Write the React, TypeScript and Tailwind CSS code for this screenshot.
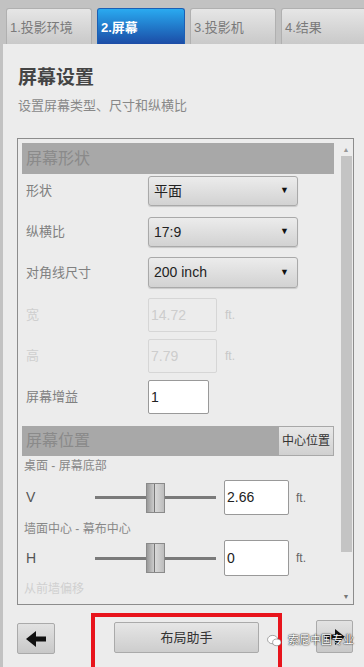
import { ReactNode } from 'react';

const font = { fontFamily: '"Liberation Sans", "Noto Sans CJK SC", sans-serif' };

const tabs = [
  { name: '1.投影环境', w: 'w-[86px]', active: false },
  { name: '2.屏幕', w: 'w-[88px]', active: true },
  { name: '3.投影机', w: 'w-[86px]', active: false },
  { name: '4.结果', w: 'w-[86px]', active: false },
];

function Select({ value }: { value: string }) {
  return (
    <div className="flex h-full w-[150px] items-center justify-between rounded-[3px] border border-[#a9a9a9] bg-gradient-to-b from-[#ececec] to-[#d2d2d2] pl-[5px] pr-[8px] text-[14px] text-[#222] shadow-[0_1px_1px_rgba(0,0,0,0.15)]">
      <span>{value}</span>
      <span className="text-[9px] text-[#111]">▼</span>
    </div>
  );
}

function Row({ label, dim, className, children }: { label: string; dim?: boolean; className: string; children: ReactNode }) {
  return (
    <div className={`flex items-center ${className}`}>
      <span className={`w-[126px] pl-[4px] text-[13px] ${dim ? 'text-[#cfcfcf]' : 'text-[#808080]'}`}>{label}</span>
      {children}
    </div>
  );
}

function Slider() {
  return (
    <div className="relative flex h-[30px] w-[121px] items-center">
      <div className="h-[3px] w-full bg-[#7a7a7a]" />
      <div className="absolute left-[51px] top-0 flex h-[30px] w-[19px] border border-[#8a8a8a] bg-gradient-to-r from-[#9a9a9a] via-[#d8d8d8] to-[#bdbdbd]">
        <div className="w-[8px] border-r border-[#777]" />
      </div>
    </div>
  );
}

function Arrow({ dir }: { dir: 'left' | 'right' }) {
  return (
    <svg width="22" height="16" viewBox="0 0 22 16" className={dir === 'right' ? '' : 'rotate-180'}>
      <path d="M1 5.5h10V0l10 8-10 8v-5.5H1z" fill="#111" />
    </svg>
  );
}

export default function App() {
  return (
    <div className="relative flex h-[667px] w-[364px] flex-col overflow-hidden bg-[#c2c2c2]" style={font}>
      <div className="h-[4px] bg-[#444]" />

      {/* tab strip */}
      <div className="flex h-[44px] items-end gap-[5px] pl-[6px] pt-[8px]">
        {tabs.map((t) => (
          <div
            key={t.name}
            className={`${t.w} flex h-[36px] shrink-0 items-center rounded-t-[3px] border-x border-t pl-[3px] pt-[3px] text-[13px] ${
              t.active
                ? 'border-[#1b5fb4] bg-gradient-to-b from-[#2aaaf0] to-[#1c4ca6] font-bold text-white'
                : 'border-[#b0b0b0] bg-gradient-to-b from-[#e6e6e6] to-[#c9c9c9] text-[#7a7a7a]'
            }`}
          >
            {t.name}
          </div>
        ))}
      </div>

      {/* main panel */}
      <div className="ml-[3px] flex flex-1 flex-col bg-[#ececec]">
        <div className="pl-[15px] pt-[22px]">
          <h1 className="text-[19px] leading-[24px] font-bold text-[#444]">屏幕设置</h1>
          <p className="mt-[8px] text-[13px] leading-[16px] text-[#888]">设置屏幕类型、尺寸和纵横比</p>
        </div>

        <div className="mt-[24px] ml-[14px] mr-[10px] flex h-[467px] border border-[#8c8c8c] bg-[#ececec] pt-[4px] pl-[4px]">
          <div className="flex w-[312px] flex-col">
            <div className="flex h-[31px] items-center bg-[#a8a8a8] pl-[4px] text-[16px] text-[#8a8a8a]">屏幕形状</div>

            <Row label="形状" className="mt-[2px] h-[30px]">
              <Select value="平面" />
            </Row>
            <Row label="纵横比" className="mt-[11px] h-[30px]">
              <Select value="17:9" />
            </Row>
            <Row label="对角线尺寸" className="mt-[10px] h-[31px]">
              <Select value="200 inch" />
            </Row>
            <Row label="宽" dim className="mt-[10px] h-[34px]">
              <div className="flex h-full w-[69px] items-center rounded-[2px] border border-[#d6d6d6] pl-[2px] text-[14px] text-[#cdcdcd]">14.72</div>
              <span className="ml-[8px] text-[12px] text-[#c8c8c8]">ft.</span>
            </Row>
            <Row label="高" dim className="mt-[7px] h-[34px]">
              <div className="flex h-full w-[69px] items-center rounded-[2px] border border-[#d6d6d6] pl-[2px] text-[14px] text-[#cdcdcd]">7.79</div>
              <span className="ml-[8px] text-[12px] text-[#c8c8c8]">ft.</span>
            </Row>
            <Row label="屏幕增益" className="mt-[7px] h-[34px]">
              <div className="flex h-full w-[61px] items-center rounded-[2px] border border-[#999] bg-white pl-[2px] text-[14px] text-[#222]">1</div>
            </Row>

            <div className="mt-[12px] flex h-[30px] items-center justify-between bg-[#a8a8a8] pl-[4px]">
              <span className="text-[16px] text-[#8a8a8a]">屏幕位置</span>
              <div className="mr-px flex h-[28px] items-center bg-gradient-to-b from-[#e8e8e8] to-[#d0d0d0] px-[3px] text-[12px] text-[#333]">中心位置</div>
            </div>

            <div className="mt-[2px] pl-[2px] text-[12px] leading-[16px] text-[#888]">桌面 - 屏幕底部</div>
            <div className="mt-[6px] flex h-[35px] items-center">
              <span className="w-[73px] pl-[4px] text-[14px] text-[#555]">V</span>
              <Slider />
              <div className="ml-[8px] flex h-full w-[65px] items-center rounded-[2px] border border-[#999] bg-white pl-[2px] text-[14px] text-[#222]">2.66</div>
              <span className="ml-[7px] text-[12px] text-[#666]">ft.</span>
            </div>
            <div className="mt-[6px] pl-[2px] text-[12px] leading-[16px] text-[#888]">墙面中心 - 幕布中心</div>
            <div className="mt-[3px] flex h-[36px] items-center">
              <span className="w-[73px] pl-[4px] text-[14px] text-[#555]">H</span>
              <Slider />
              <div className="ml-[8px] flex h-full w-[65px] items-center rounded-[2px] border border-[#999] bg-white pl-[2px] text-[14px] text-[#222]">0</div>
              <span className="ml-[7px] text-[12px] text-[#666]">ft.</span>
            </div>
            <div className="mt-[5px] pl-[2px] text-[12px] leading-[16px] text-[#d0d0d0]">从前墙偏移</div>
          </div>

          {/* scrollbar */}
          <div className="ml-[6px] flex w-[12px] flex-col items-center pt-[2px]">
            <span className="text-[7px] leading-[10px] text-[#999]">▲</span>
            <div className="mt-[1px] h-[396px] w-[11px] bg-[#c4c4c4]" />
            <div className="flex-1" />
            <span className="mb-[2px] text-[7px] leading-[10px] text-[#777]">▼</span>
          </div>
        </div>

        {/* bottom bar */}
        <div className="flex flex-1 items-start border-b-[3px] border-[#9a9a9a] pt-[8px]">
          <div className="mt-[10px] ml-[14px] flex h-[31px] w-[38px] items-center justify-center rounded-[2px] border border-[#aaa] bg-gradient-to-b from-[#e2e2e2] to-[#c8c8c8]">
            <Arrow dir="left" />
          </div>
          <div className="ml-[36px] flex h-[56px] w-[191px] justify-center border-[4px] border-b-0 border-[#e8141c] pt-[5px]">
            <div className="flex h-[31px] w-[145px] items-center justify-center rounded-[2px] border border-[#aaa] bg-gradient-to-b from-[#e6e6e6] to-[#cdcdcd] text-[13px] text-[#333]">
              布局助手
            </div>
          </div>
          <div className="mt-[7px] ml-[34px] flex h-[33px] w-[37px] items-center justify-center rounded-[2px] border border-[#aaa] bg-gradient-to-b from-[#e2e2e2] to-[#c8c8c8]">
            <Arrow dir="right" />
          </div>
        </div>
      </div>

      {/* watermark */}
      <div className="absolute left-[267px] top-[633px] flex items-center gap-[6px] whitespace-nowrap">
        <svg width="15" height="13" viewBox="0 0 16 14">
          <ellipse cx="6" cy="6" rx="5.5" ry="4.5" fill="#fff" stroke="#666" strokeWidth="0.6" />
          <ellipse cx="10.5" cy="9" rx="4.5" ry="3.6" fill="#fff" stroke="#666" strokeWidth="0.6" />
        </svg>
        <span className="text-[11px] leading-[14px] text-white [text-shadow:0_0_2px_#222,0_0_1px_#000]">索尼中国专业</span>
      </div>
    </div>
  );
}
